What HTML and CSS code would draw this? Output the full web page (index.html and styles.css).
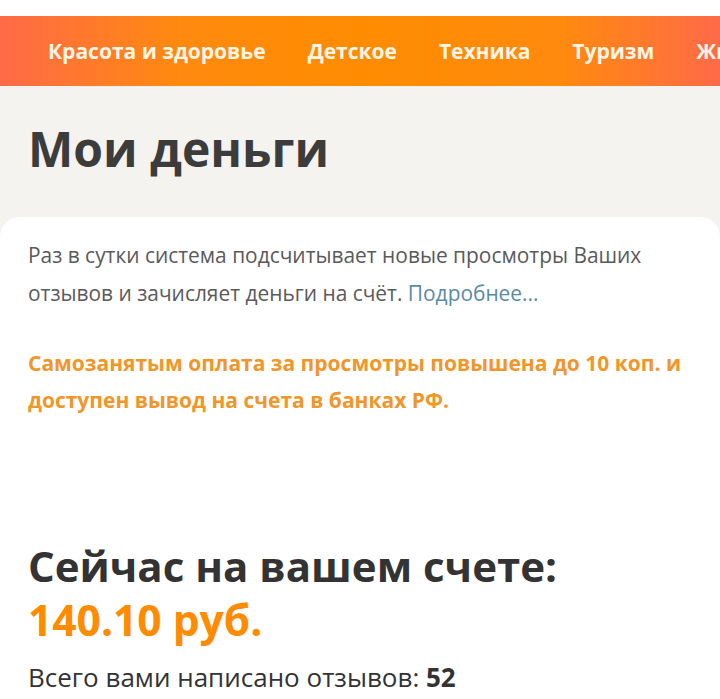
FILE: index.html
```html
<!DOCTYPE html>
<html lang="ru">

<head>
  <meta charset="UTF-8">
  <meta name="viewport" content="width=device-width, initial-scale=1.0">
  <title>Мои деньги</title>
  <link rel="stylesheet" href="styles.css">
</head>

<body>

  <div class="top-strip"></div>

  <!-- category menu -->
  <nav class="menu">
    <a href="#">Красота и здоровье</a>
    <a href="#">Детское</a>
    <a href="#">Техника</a>
    <a href="#">Туризм</a>
    <a href="#">Жилье</a>
  </nav>

  <h1 class="page-title">Мои деньги</h1>

  <div class="money-card">
    <p class="info">Раз в сутки система подсчитывает новые просмотры Ваших отзывов и зачисляет деньги на счёт. <a href="#">Подробнее...</a></p>

    <p class="notice">Самозанятым оплата за просмотры повышена до 10 коп. и доступен вывод на счета в банках РФ.</p>

    <h2 class="balance-title">Сейчас на вашем счете:</h2>
    <div class="balance">140.10 руб.</div>
    <p class="reviews">Всего вами написано отзывов: <b>52</b></p>
  </div>

</body>

</html>
```

FILE: styles.css
```css
* {
  margin: 0;
  padding: 0;
  box-sizing: border-box;
}

body {
  font-family: "Open Sans", Arial, sans-serif;
  background-color: #f4f3ef;
  color: #333;
  overflow: hidden;
}

.top-strip {
  height: 16px;
  background-color: #ffffff;
}

.menu {
  height: 70px;
  display: flex;
  align-items: center;
  gap: 42px;
  padding-left: 48px;
  white-space: nowrap;
  overflow: hidden;
  background: linear-gradient(to right, #ff6a48 0%, #ff8a0e 25%, #ff8c00 50%, #ff8a0e 78%, #ff6a48 100%);
}

.menu a {
  color: #fff6e6;
  font-size: 21px;
  font-weight: bold;
  text-decoration: none;
}

.page-title {
  font-size: 48px;
  font-weight: bold;
  color: #3c3c3c;
  padding: 32px 28px 0;
  line-height: 62px;
  height: 131px;
}

.money-card {
  background-color: #ffffff;
  border-radius: 20px 20px 0 0;
  padding: 19px 28px 0;
  min-height: 500px;
}

.info {
  font-size: 20.9px;
  line-height: 38px;
  color: #5a5a5a;
}

.info a {
  color: #5b8aa6;
  text-decoration: none;
}

.notice {
  font-size: 21px;
  line-height: 37px;
  font-weight: bold;
  color: #f0962a;
  margin-top: 33px;
}

.balance-title {
  font-size: 42px;
  line-height: 54px;
  color: #333;
  margin-top: 120px;
}

.balance {
  font-size: 42.5px;
  line-height: 54px;
  font-weight: bold;
  color: #ff8c00;
}

.reviews {
  font-size: 26px;
  line-height: 60px;
  color: #333;
}
```
